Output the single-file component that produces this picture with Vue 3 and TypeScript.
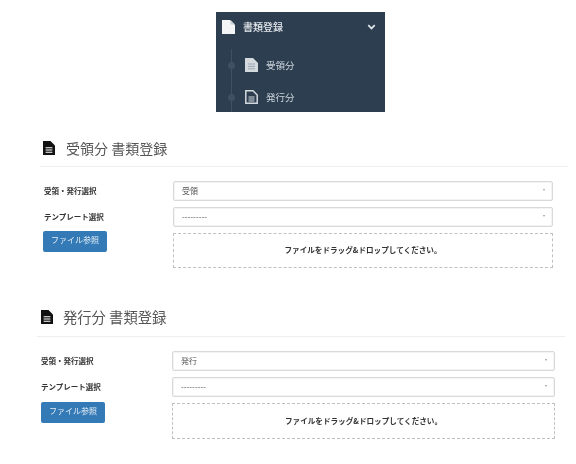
<script setup lang="ts">
interface Section {
  key: string
  title: string
  value: string
}

const sections: Section[] = [
  { key: 'received', title: '受領分 書類登録', value: '受領' },
  { key: 'issued', title: '発行分 書類登録', value: '発行' },
]
</script>

<template>
  <div class="page">
    <nav class="sidebar">
      <div class="menu-head">
        <svg class="menu-icon" viewBox="0 0 13 14" aria-hidden="true">
          <path d="M0 0H8L13 5V14H0Z" fill="#f2f4f6" />
          <path d="M8.6 0L13 4.4H8.6Z" fill="#c7ced5" />
        </svg>
        <span class="menu-title">書類登録</span>
        <svg class="chevron" viewBox="0 0 10 7" aria-hidden="true">
          <path d="M1.2 1.4L5 5.2L8.8 1.4" fill="none" stroke="#dfe4e9" stroke-width="2" />
        </svg>
      </div>
      <div class="submenu">
        <span class="rail"></span>
        <div class="sub-item">
          <span class="dot"></span>
          <svg class="sub-icon" viewBox="0 0 13 14" aria-hidden="true">
            <path d="M0 0H8L13 5V14H0Z" fill="#d4d9de" />
            <path d="M3 6H10M3 8.4H10M3 10.8H10" stroke="#9aa4ae" stroke-width="1" />
          </svg>
          <span>受領分</span>
        </div>
        <div class="sub-item">
          <span class="dot"></span>
          <svg class="sub-icon" viewBox="0 0 13 14" aria-hidden="true">
            <path d="M.8.8H8L12.2 5V13.2H.8Z" fill="none" stroke="#d4d9de" stroke-width="1.5" />
            <path d="M3.5 7H9.5M3.5 9H9.5M3.5 11H9.5" stroke="#d4d9de" stroke-width="1" />
          </svg>
          <span>発行分</span>
        </div>
      </div>
    </nav>

    <section v-for="s in sections" :key="s.key" class="panel" :class="`panel-${s.key}`">
      <h2 class="heading">
        <svg class="heading-icon" viewBox="0 0 12 14" aria-hidden="true">
          <path d="M0 0H7.5L12 4.5V14H0Z" fill="#111" />
          <path d="M2.6 6.8H9.4M2.6 9H9.4M2.6 11.2H9.4" stroke="#fff" stroke-width="1.1" />
        </svg>
        <span>{{ s.title }}</span>
      </h2>
      <div class="form">
        <label class="label">受領・発行選択</label>
        <div class="select">
          <span>{{ s.value }}</span><i class="caret"></i>
        </div>
        <label class="label">テンプレート選択</label>
        <div class="select">
          <span>---------</span><i class="caret"></i>
        </div>
        <div class="button-cell">
          <button class="button" type="button">ファイル参照</button>
        </div>
        <div class="dropzone">ファイルをドラッグ&amp;ドロップしてください。</div>
      </div>
    </section>
  </div>
</template>

<style scoped>
.page {
  width: 576px;
  height: 464px;
  overflow: hidden;
  background: #fff;
  font-family: "Noto Sans CJK JP", "Liberation Sans", sans-serif;
  color: #333;
  padding-top: 12px;
  box-sizing: border-box;
  filter: blur(0.4px);
}
.sidebar {
  width: 169px;
  height: 100px;
  margin-left: 216px;
  background: #2c3e50;
  color: #dfe4e9;
  overflow: hidden;
}
.menu-head {
  display: flex;
  align-items: center;
  height: 30px;
  padding: 0 9px 0 6px;
  font-size: 10px;
  font-weight: 500;
}
.menu-icon {
  width: 13px;
  height: 14px;
  margin-right: 8px;
}
.menu-title {
  flex: 1;
  padding-bottom: 2px;
  color: #e6eaee;
}
.chevron {
  width: 9px;
  height: 6px;
}
.submenu {
  position: relative;
  padding-top: 7px;
}
.rail {
  position: absolute;
  left: 15px;
  top: 7px;
  bottom: 0;
  width: 1px;
  background: #3d5064;
}
.sub-item {
  position: relative;
  display: flex;
  align-items: center;
  height: 32px;
  padding-left: 29px;
  font-size: 9.5px;
  color: #cfd6dc;
}
.dot {
  position: absolute;
  left: 12px;
  top: 13px;
  width: 7px;
  height: 7px;
  border-radius: 50%;
  background: #3d5064;
}
.sub-icon {
  width: 13px;
  height: 14px;
  margin-right: 8px;
}
.panel {
  box-sizing: border-box;
  width: 528px;
}
.panel-received {
  margin: 29px 0 0 40px;
}
.panel-issued {
  margin: 42px 0 0 37px;
}
.heading {
  display: flex;
  align-items: center;
  height: 14px;
  margin: 0;
  border-bottom: 1px solid #eeeeee;
  font-size: 14px;
  font-weight: 400;
  color: #555;
  line-height: 1;
}
.panel-received .heading {
  padding: 0 0 11px 3px;
}
.panel-issued .heading {
  padding: 0 0 12px 4px;
  font-size: 14.3px;
}
.heading-icon {
  width: 12px;
  height: 14px;
  margin-right: 11px;
}
.panel-issued .heading-icon {
  margin-right: 10px;
}
.form {
  display: grid;
  grid-template-columns: 133px 380px;
  grid-template-rows: 20px 20px auto;
  row-gap: 6px;
  align-items: center;
  padding-top: 14px;
}
.panel-issued .form {
  grid-template-columns: 135px 383px;
}
.label {
  padding: 0 0 2px 4px;
  font-size: 7.5px;
  font-weight: 700;
  color: #333;
}
.panel-issued .label {
  padding-bottom: 1px;
}
.select {
  box-sizing: border-box;
  height: 20px;
  display: flex;
  align-items: center;
  justify-content: space-between;
  padding: 0 7px 2px 8px;
  border: 1px solid #d9d9d9;
  box-shadow: inset 0 0 0 1px #f3f3f3;
  border-radius: 2px;
  font-size: 8px;
  color: #555;
}
.caret {
  width: 0;
  height: 0;
  border-left: 1.5px solid transparent;
  border-right: 1.5px solid transparent;
  border-top: 2px solid #999;
}
.button-cell {
  display: flex;
  align-self: start;
  padding-left: 3px;
  margin-top: -2px;
}
.panel-issued .button-cell {
  padding-left: 4px;
  margin-top: -1px;
}
.button {
  width: 64px;
  height: 21px;
  padding: 0 0 3px;
  border: none;
  border-radius: 2px;
  background: #337ab7;
  color: #e8f0f7;
  font-family: inherit;
  font-size: 8px;
  line-height: 1;
}
.dropzone {
  box-sizing: border-box;
  height: 35px;
  padding-bottom: 2px;
  display: flex;
  align-items: center;
  justify-content: center;
  border: 1px dashed #c0c0c0;
  font-size: 7.6px;
  font-weight: 700;
  color: #333;
}
.panel-issued .dropzone {
  height: 36px;
}
</style>
